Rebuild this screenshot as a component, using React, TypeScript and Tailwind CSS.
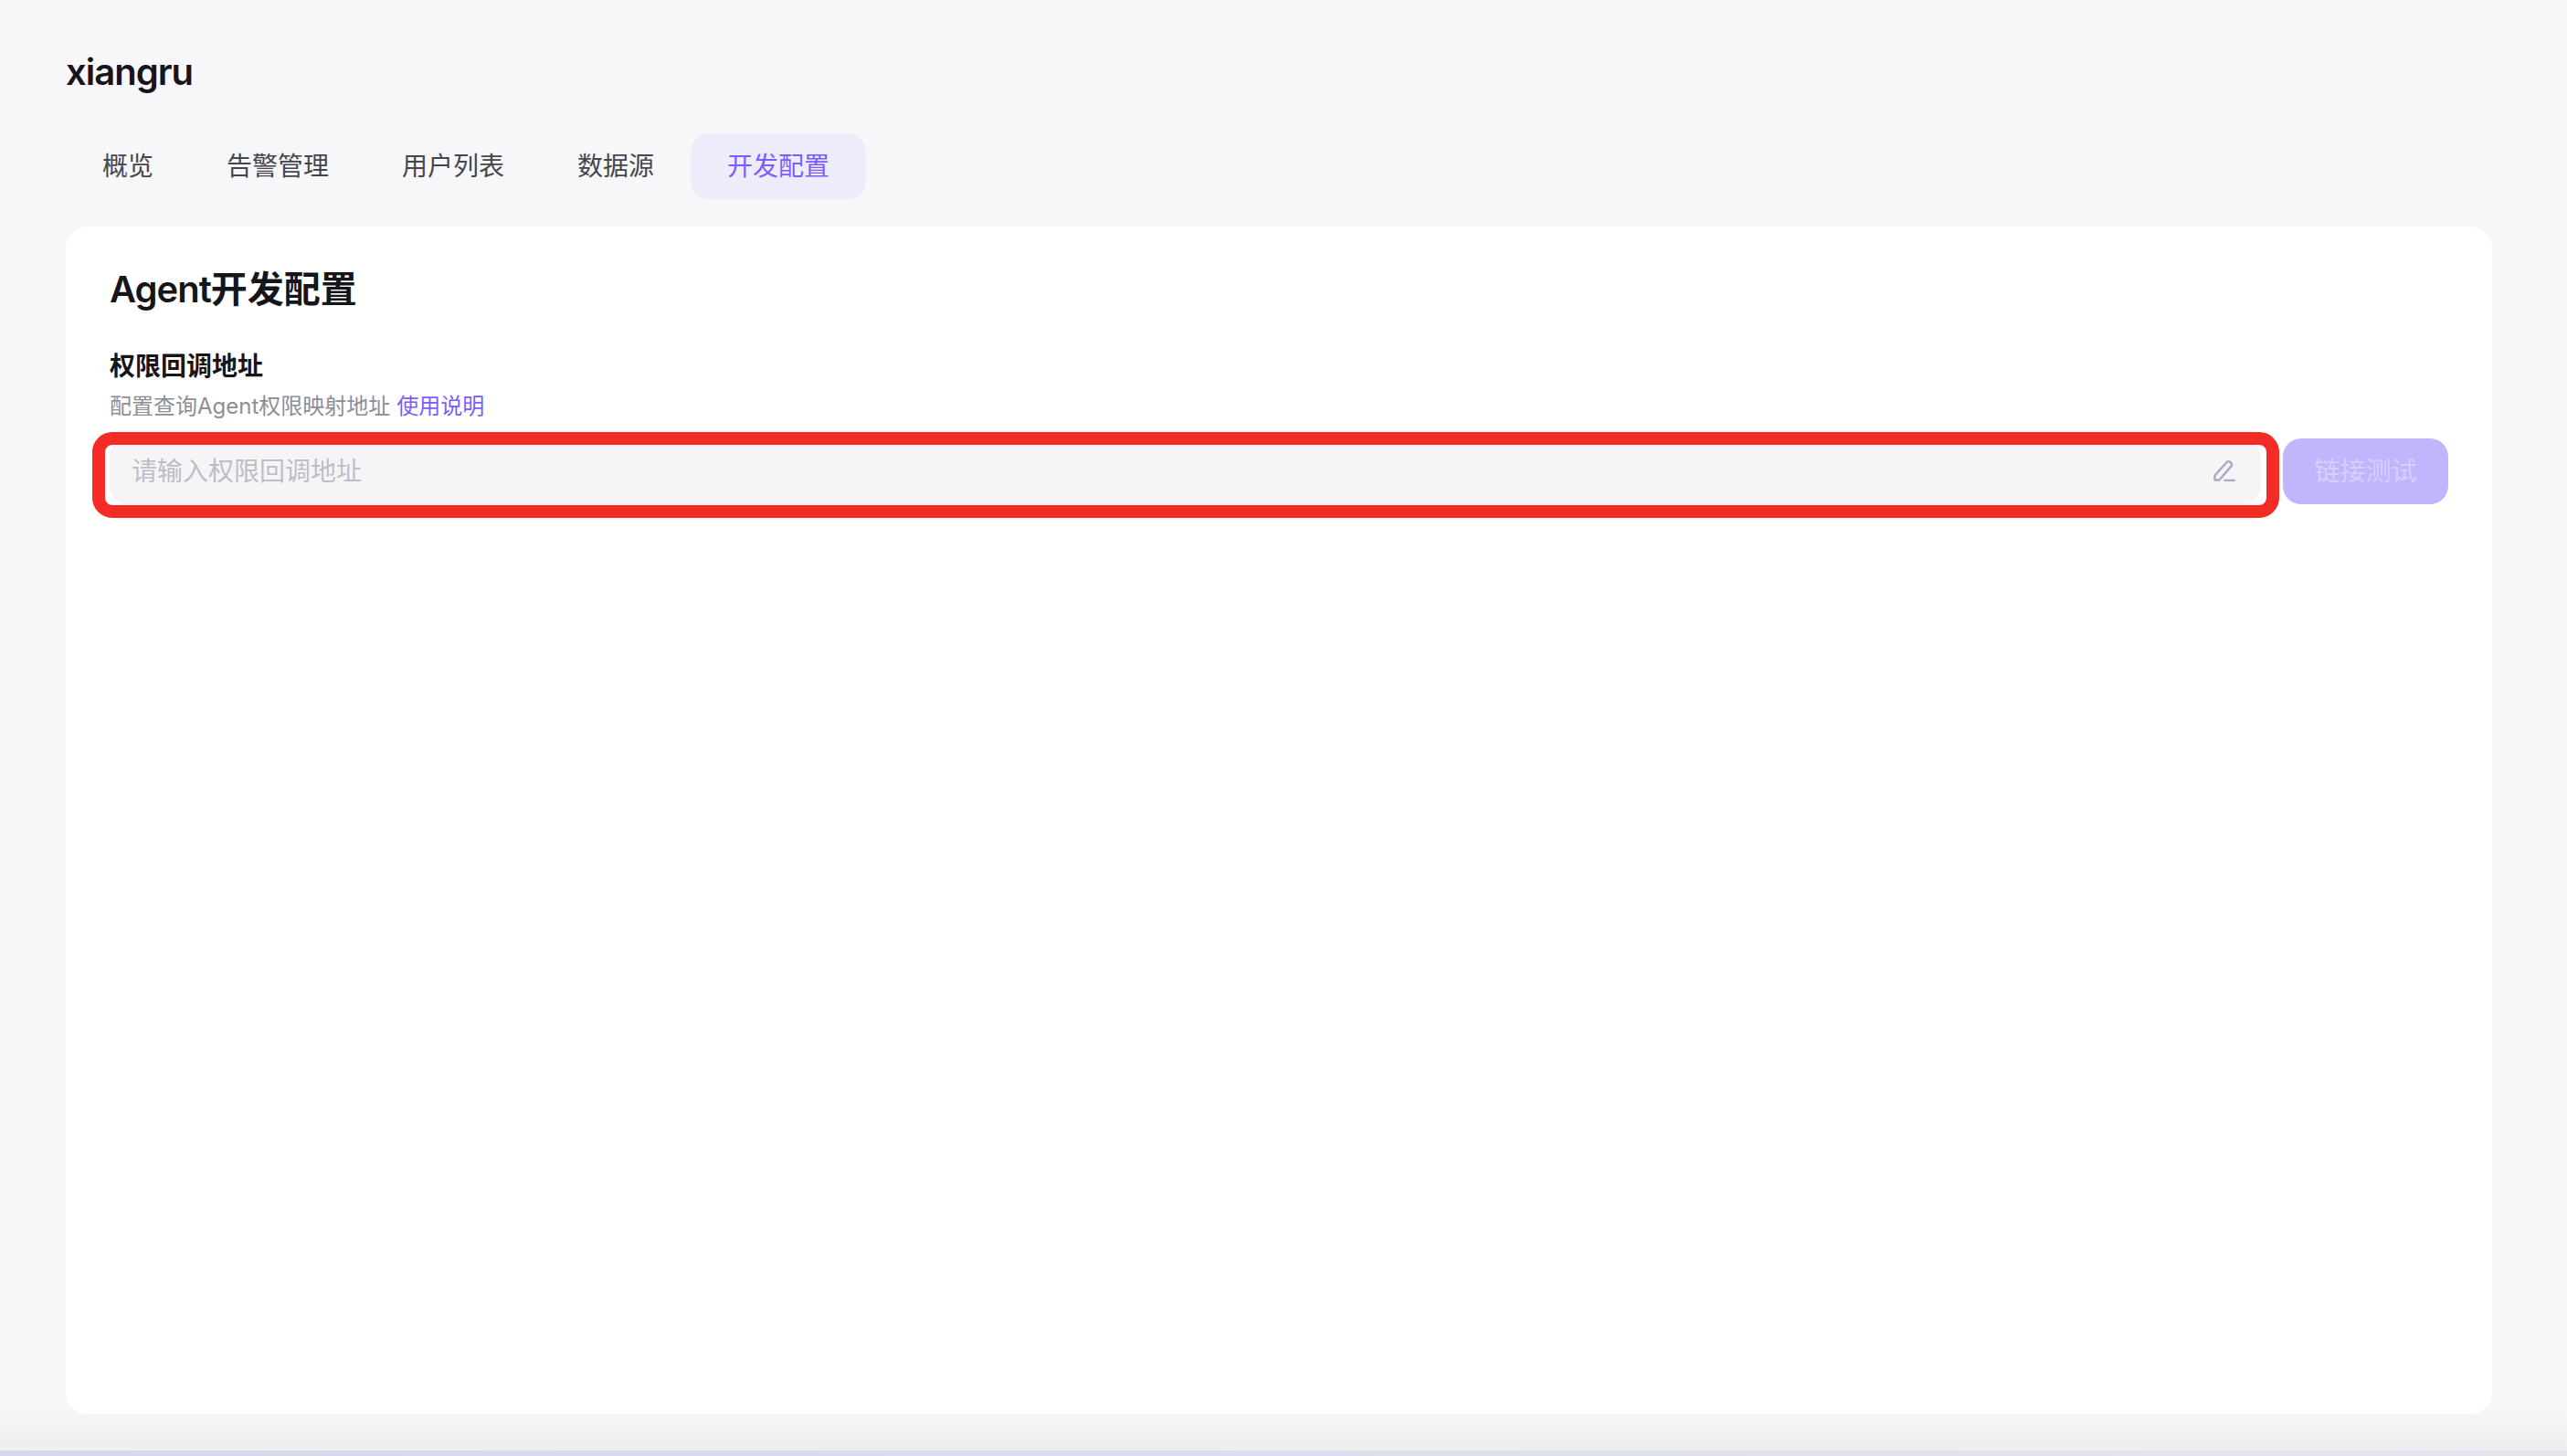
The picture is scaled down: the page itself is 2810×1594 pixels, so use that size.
const tabs = ['概览', '告警管理', '用户列表', '数据源', '开发配置'];

const App = () => {
  return (
    <div className="relative flex h-[1594px] w-full flex-col overflow-hidden bg-[linear-gradient(180deg,#f7f7f9_0,#f7f7f9_1540px,#eeeef0_1588px)] font-['Inter','Noto_Sans_CJK_SC',sans-serif]">
      <div className="flex flex-1 flex-col pb-[40px] pl-[72px] pr-[82px] pt-[51px]">
        <h1 className="h-[56px] text-[40px] font-semibold leading-[56px] tracking-[-1px] text-[#16161a]">xiangru</h1>

        {/* Tabs */}
        <div className="mt-[39px] flex">
          {tabs.map((tab, i) => (
            <div
              key={tab}
              className={`flex h-[72px] items-center rounded-[20px] px-[40px] text-[28px] ${
                i === 4 ? 'bg-[#eeecfb] text-[#7c5cfc]' : 'text-[#45454d]'
              }`}
            >
              {tab}
            </div>
          ))}
        </div>

        {/* Card */}
        <div className="mt-[30px] flex-1 rounded-[24px] bg-white px-[48px] pt-[41px]">
          <h2 className="h-[56px] text-[40px] font-semibold leading-[56px] text-[#16161a]">
            <span className="tracking-[-1px]">Agent</span>开发配置
          </h2>
          <div className="mt-[36px] h-[40px] text-[28px] font-semibold leading-[40px] text-[#16161a]">权限回调地址</div>
          <p className="mt-[6px] flex h-[36px] items-center text-[24px] leading-[36px] text-[#8d8d96]">
            配置查询Agent权限映射地址
            <a className="ml-[7px] text-[#7c5cfc]">使用说明</a>
          </p>

          <div className="mt-[17px] flex gap-[24px]">
            <div className="flex h-[72px] flex-1 items-center justify-between rounded-[20px] bg-[#f5f5f8] pl-[24px] pr-[28px] text-[28px] text-[#bebec6]">
              <span>请输入权限回调地址</span>
              <svg viewBox="0 0 24 24" className="-mt-[2px] h-[24px] w-[24px]" fill="none" stroke="#a9abc4" strokeWidth="2.4" strokeLinecap="round" strokeLinejoin="round">
                <path d="M1.5 22.5V17.5L14.5 3a2.6 2.6 0 0 1 3.7-.2l1 .9a2.6 2.6 0 0 1 .2 3.7L6.5 22.5Z" />
                <path d="M12.5 23H23" />
              </svg>
            </div>
            <button className="h-[72px] w-[181px] rounded-[20px] bg-[#c0b6fe] text-[28px] text-[#d6d0fe]">
              链接测试
            </button>
          </div>
        </div>
      </div>

      {/* Bottom strip */}
      <div className="h-[6px] bg-gradient-to-r from-[#d5d7eb] to-[#e5e5ee]" />

      {/* Red annotation */}
      <div className="absolute left-[101px] top-[473px] h-[94px] w-[2394px] rounded-[22px] border-[14px] border-[#f42c26]" />
    </div>
  );
};

export default App;
